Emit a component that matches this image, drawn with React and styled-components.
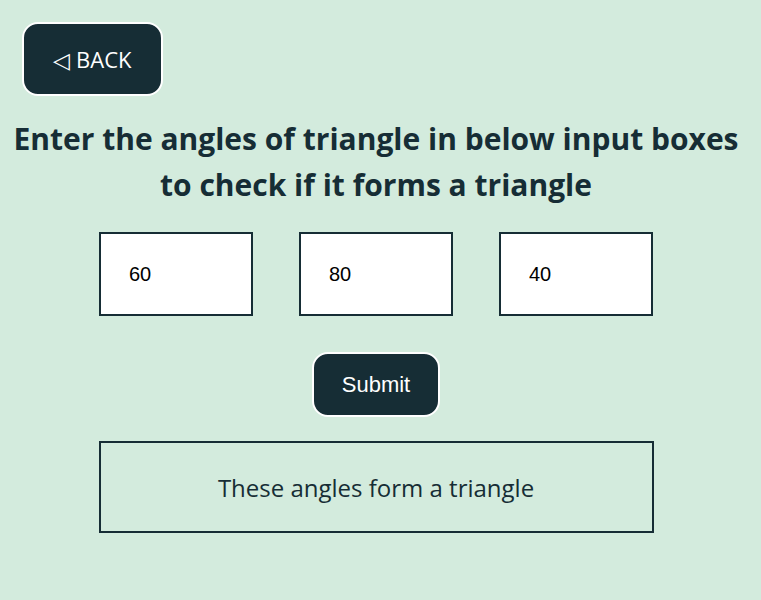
import React from 'react';
import styled, { createGlobalStyle } from 'styled-components';

const GlobalStyle = createGlobalStyle`
  body {
    margin: 0;
    background-color: #d3ebdd;
    font-family: "Open Sans", "Liberation Sans", sans-serif;
    color: #162d35;
  }
`;

const Page = styled.div`
  width: 752px;
  min-height: 600px;
  padding-top: 22px;
  display: flex;
  flex-direction: column;
  align-items: center;
`;

const TopBar = styled.div`
  width: 100%;
  padding-left: 22px;
  box-sizing: border-box;
`;

const BackButton = styled.button`
  width: 141px;
  height: 74px;
  background-color: #162d35;
  color: #ffffff;
  border: 2px solid #ffffff;
  border-radius: 16px;
  font-family: "Open Sans", sans-serif;
  font-size: 22px;
  cursor: pointer;
`;

const Heading = styled.h1`
  margin: 20px 0 0;
  text-align: center;
  font-size: 30px;
  line-height: 46px;
  font-weight: 700;
  letter-spacing: 0;
`;

const InputRow = styled.div`
  display: flex;
  gap: 46px;
  margin-top: 24px;
`;

const AngleInput = styled.input`
  width: 154px;
  height: 84px;
  box-sizing: border-box;
  border: 2px solid #162d35;
  background: #ffffff;
  padding: 0 0 0 28px;
  font-family: "Liberation Sans", Arial, sans-serif;
  font-size: 20px;
  color: #000;
  outline: none;
`;

const SubmitButton = styled.button`
  margin-top: 36px;
  width: 128px;
  height: 65px;
  background-color: #162d35;
  color: #ffffff;
  border: 2px solid #ffffff;
  border-radius: 16px;
  font-family: "Liberation Sans", Arial, sans-serif;
  font-size: 22px;
  cursor: pointer;
`;

const Result = styled.div`
  margin-top: 24px;
  width: 555px;
  height: 92px;
  box-sizing: border-box;
  border: 2px solid #162d35;
  display: flex;
  align-items: center;
  justify-content: center;
  font-size: 24px;
`;

export default function App() {
  return (
    <>
      <GlobalStyle />
      <Page>
        <TopBar>
          <BackButton>◁ BACK</BackButton>
        </TopBar>
        <Heading>
          Enter the angles of triangle in below input boxes
          <br />
          to check if it forms a triangle
        </Heading>
        <InputRow>
          <AngleInput type="number" defaultValue="60" />
          <AngleInput type="number" defaultValue="80" />
          <AngleInput type="number" defaultValue="40" />
        </InputRow>
        <SubmitButton>Submit</SubmitButton>
        <Result>These angles form a triangle</Result>
      </Page>
    </>
  );
}
